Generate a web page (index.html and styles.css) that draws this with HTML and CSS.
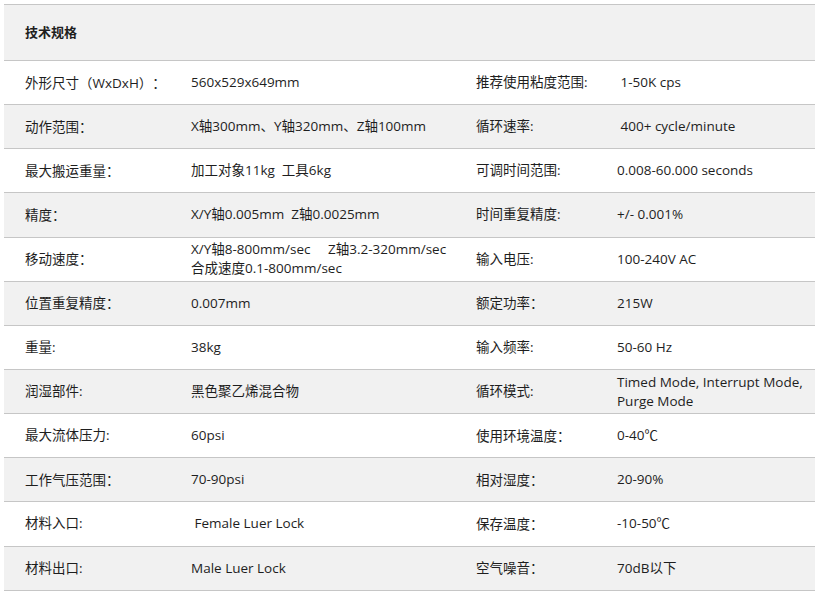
FILE: index.html
```html
<!DOCTYPE html>
<html lang="zh">
<head>
<meta charset="utf-8">
<title>技术规格</title>
<link rel="stylesheet" href="styles.css">
</head>
<body>
<div class="spec">
  <div class="row head"><div class="cell title">技术规格</div></div>
  <div class="row">
    <div class="cell">外形尺寸<span class="fw">（</span>WxDxH<span class="fw">）：</span></div><div class="cell">560x529x649mm</div>
    <div class="cell">推荐使用粘度范围:</div><div class="cell">&nbsp;1-50K cps</div>
  </div>
  <div class="row alt">
    <div class="cell">动作范围<span class="fw">：</span></div><div class="cell">X轴300mm、Y轴320mm、Z轴100mm</div>
    <div class="cell">循环速率:</div><div class="cell">&nbsp;400+ cycle/minute</div>
  </div>
  <div class="row">
    <div class="cell">最大搬运重量<span class="fw">：</span></div><div class="cell">加工对象11kg&nbsp; 工具6kg</div>
    <div class="cell">可调时间范围:</div><div class="cell">0.008-60.000 seconds</div>
  </div>
  <div class="row alt">
    <div class="cell">精度<span class="fw">：</span></div><div class="cell">X/Y轴0.005mm&nbsp; Z轴0.0025mm</div>
    <div class="cell">时间重复精度:</div><div class="cell">+/- 0.001%</div>
  </div>
  <div class="row">
    <div class="cell">移动速度<span class="fw">：</span></div><div class="cell multi">X/Y轴8-800mm/sec&nbsp;&nbsp;&nbsp;&nbsp; Z轴3.2-320mm/sec<br>合成速度0.1-800mm/sec</div>
    <div class="cell">输入电压:</div><div class="cell">100-240V AC</div>
  </div>
  <div class="row alt">
    <div class="cell">位置重复精度<span class="fw">：</span></div><div class="cell">0.007mm</div>
    <div class="cell">额定功率<span class="fw">：</span></div><div class="cell">215W</div>
  </div>
  <div class="row">
    <div class="cell">重量:</div><div class="cell">38kg</div>
    <div class="cell">输入频率:</div><div class="cell">50-60 Hz</div>
  </div>
  <div class="row alt">
    <div class="cell">润湿部件:</div><div class="cell">黑色聚乙烯混合物</div>
    <div class="cell">循环模式:</div><div class="cell multi">Timed Mode, Interrupt Mode,<br>Purge Mode</div>
  </div>
  <div class="row">
    <div class="cell">最大流体压力:</div><div class="cell">60psi</div>
    <div class="cell">使用环境温度<span class="fw">：</span></div><div class="cell">0-40℃</div>
  </div>
  <div class="row alt">
    <div class="cell">工作气压范围<span class="fw">：</span></div><div class="cell">70-90psi</div>
    <div class="cell">相对湿度<span class="fw">：</span></div><div class="cell">20-90%</div>
  </div>
  <div class="row">
    <div class="cell">材料入口:</div><div class="cell">&nbsp;Female Luer Lock</div>
    <div class="cell">保存温度<span class="fw">：</span></div><div class="cell">-10-50℃</div>
  </div>
  <div class="row alt">
    <div class="cell">材料出口:</div><div class="cell">Male Luer Lock</div>
    <div class="cell">空气噪音<span class="fw">：</span></div><div class="cell">70dB以下</div>
  </div>
</div>
</body>
</html>
```

FILE: styles.css
```css
html, body {
  margin: 0;
  padding: 0;
  background: #ffffff;
}

body {
  font-family: "Open Sans", "Noto Sans CJK SC", sans-serif;
  font-size: 13.5px;
  color: #1e1e1e;
  text-spacing-trim: space-all;
}

.spec {
  margin: 4px 0 0 4px;
  width: 811px;
  border-top: 1px solid #c6c6c6;
}

.row {
  display: grid;
  grid-template-columns: 166px 285px 141px 1fr;
  align-items: center;
  height: 44.15px;
  box-sizing: border-box;
  border-bottom: 1px solid #c6c6c6;
}

.row.head {
  height: 56px;
  background: #f1f1f1;
  grid-template-columns: 1fr;
}

.row.alt {
  background: #f1f1f1;
}

.cell {
  padding-left: 21px;
  white-space: nowrap;
  line-height: 19px;
}

.cell.title {
  font-weight: bold;
  font-size: 13px;
}

.cell.multi {
  line-height: 19px;
}

.fw {
  font-family: "Noto Sans CJK TC", "Noto Sans CJK SC", sans-serif;
}
```
